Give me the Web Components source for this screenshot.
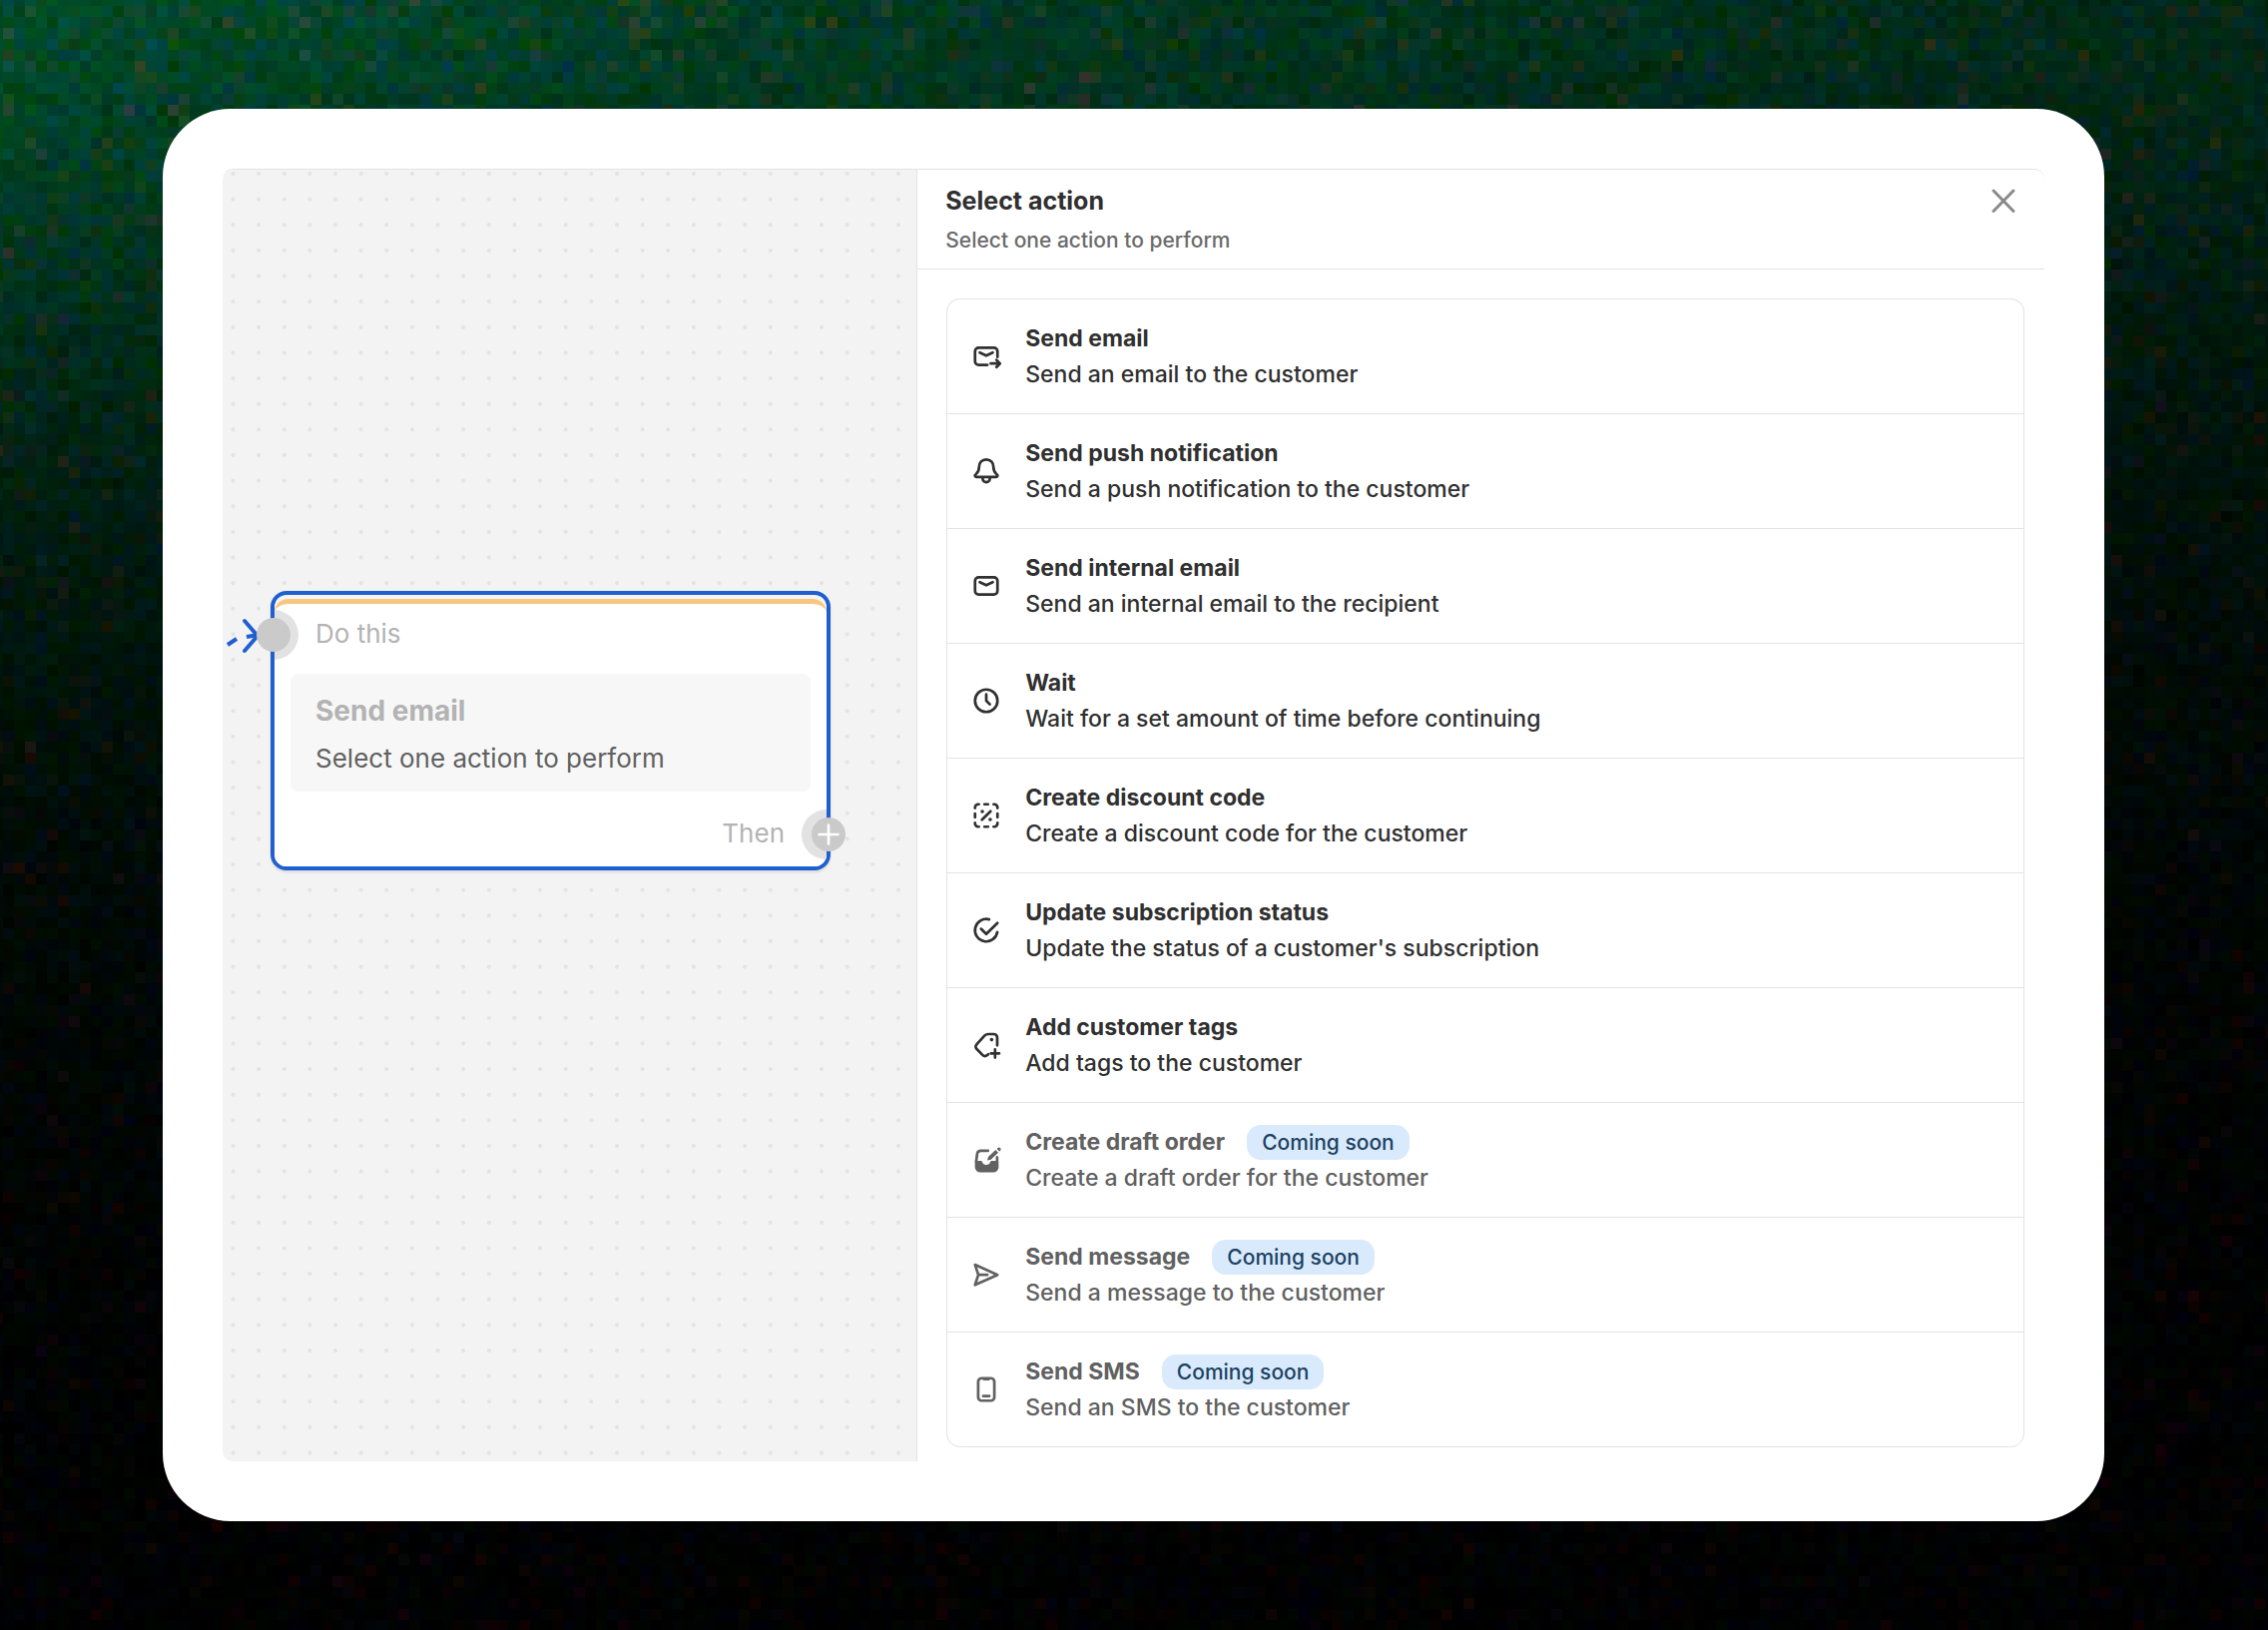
<!DOCTYPE html>
<html lang="en">
<head>
<meta charset="utf-8">
<title>Select action</title>
<style>
  html { background: #000; }
  body { margin: 0; font-family: Inter, "Liberation Sans", sans-serif; color: #303030; }
</style>
</head>
<body>
<workflow-app></workflow-app>

<template id="t-app">
  <style>
    :host { display: block; position: relative; min-height: 100vh; box-sizing: border-box; padding: 109px 164px 109px 163px; }
    noise-backdrop { position: absolute; inset: 0; }
    .frame { position: relative; background: #fff; border-radius: 68px; padding: 60px; }
    .split { display: grid; grid-template-columns: minmax(0, 8fr) minmax(0, 13fr); border-top: 1px solid #e3e3e3; border-radius: 10px; }
  </style>
  <noise-backdrop></noise-backdrop>
  <main class="frame">
    <div class="split">
      <flow-canvas>
        <flow-node></flow-node>
      </flow-canvas>
      <action-panel></action-panel>
    </div>
  </main>
</template>

<template id="t-canvas">
  <style>
    :host { display: block; position: relative; overflow: hidden; background: #f3f3f3; border-radius: 10px 0 0 10px; }
    svg { position: absolute; inset: 0; width: 100%; height: 100%; }
    ::slotted(flow-node) { position: absolute; left: 48px; top: 422px; }
  </style>
  <svg aria-hidden="true">
    <defs>
      <pattern id="dots" x="-2.3" y="-8.8" width="25.63" height="25.63" patternUnits="userSpaceOnUse">
        <circle cx="12.8" cy="12.8" r="2" fill="#e2e2e2"/>
      </pattern>
    </defs>
    <rect width="100%" height="100%" fill="url(#dots)"/>
    <g fill="none" stroke="#1f5fd0" stroke-width="4" stroke-linejoin="round">
      <path d="M22 452L35 467L22 482" stroke-linecap="round"/>
      <path d="M24 468L36 466M5 476L14 470"/>
    </g>
  </svg>
  <slot></slot>
</template>

<template id="t-node">
  <style>
    :host { display: block; box-sizing: border-box; width: 561px; border: 4px solid #1f5fd0; border-radius: 16px; background: #f4f4f4; padding-top: 4px; box-shadow: 0 2px 3px #0000001a; font-size: 26px; line-height: 36px; font-weight: 400; color: #b3b3b3; }
    .card { display: flex; flex-direction: column; border-top: 5px solid #f9c67f; border-radius: 14px 14px 12px 12px; background: #fff; padding: 12px 16px 15px; }
    .in { padding-left: 25px; }
    .step { margin: 22px 0 24px; padding: 19px 25px 15px; display: flex; flex-direction: column; gap: 12px; background: #f7f7f7; border-radius: 8px; }
    h3 { margin: 0; font-size: 28px; font-weight: 650; line-height: 36px; }
    p { margin: 0; color: #616161; }
    .out { text-align: right; padding-right: 26px; }
    .halo { position: absolute; inset: 0; overflow: hidden; border-radius: 12px; pointer-events: none; }
    .halo i { position: absolute; width: 50px; height: 50px; border-radius: 50%; background: #e2e2e2; }
    .halo .a { left: -26px; top: 15px; }
    .halo .b { right: -25px; bottom: 7px; }
    .port { position: absolute; width: 34px; height: 34px; border-radius: 50%; background: #cacaca; border: 0; padding: 0; display: grid; place-items: center; }
    .port.a { left: -18px; top: 23px; }
    .port.b { right: -19px; bottom: 15px; }
    svg { width: 22px; height: 22px; }
  </style>
  <div class="card">
    <div class="in">Do this</div>
    <div class="step"><h3>Send email</h3><p>Select one action to perform</p></div>
    <div class="out">Then</div>
  </div>
  <div class="halo"><i class="a"></i><i class="b"></i></div>
  <span class="port a"></span>
  <button class="port b" type="button" aria-label="Add next step"><svg viewBox="0 0 22 22"><path d="M11 1.500V20.500M1.500 11H20.500" stroke="#fff" stroke-width="2.600" stroke-linecap="round"/></svg></button>
</template>

<template id="t-panel">
  <style>
    :host { display: flex; flex-direction: column; border-left: 1px solid #e3e3e3; }
    header { display: flex; justify-content: space-between; align-items: flex-start; padding: 13px 23px 10px 28px; border-bottom: 1px solid #e3e3e3; }
    .titles { display: flex; flex-direction: column; gap: 4px; }
    h2 { margin: 0; font-size: 25px; line-height: 36px; font-weight: 650; }
    p { margin: 0; font-size: 21px; line-height: 36px; font-weight: 450; color: #6b6b6b; }
    button { border: 0; background: none; padding: 0; width: 36px; height: 36px; display: grid; place-items: center; }
    svg { width: 36px; height: 36px; }
    .list { margin: 29px 20px 14px 29px; border: 1px solid #e3e3e3; border-bottom: 0; border-radius: 14px; display: flex; flex-direction: column; }
  </style>
  <header>
    <div class="titles"><h2>Select action</h2><p>Select one action to perform</p></div>
    <button type="button" aria-label="Close"><svg viewBox="0 0 36 36"><path d="M8 8L28 28.500M28 8L8 28.500" fill="none" stroke="#8a8a8a" stroke-width="3" stroke-linecap="round"/></svg></button>
  </header>
  <div class="list" role="list">
    <action-item role="listitem" icon="forward"><span>Send email</span><span slot="hint">Send an email to the customer</span></action-item>
    <action-item role="listitem" icon="bell"><span>Send push notification</span><span slot="hint">Send a push notification to the customer</span></action-item>
    <action-item role="listitem" icon="mail"><span>Send internal email</span><span slot="hint">Send an internal email to the recipient</span></action-item>
    <action-item role="listitem" icon="clock"><span>Wait</span><span slot="hint">Wait for a set amount of time before continuing</span></action-item>
    <action-item role="listitem" icon="discount"><span>Create discount code</span><span slot="hint">Create a discount code for the customer</span></action-item>
    <action-item role="listitem" icon="check"><span>Update subscription status</span><span slot="hint">Update the status of a customer's subscription</span></action-item>
    <action-item role="listitem" icon="tag"><span>Add customer tags</span><span slot="hint">Add tags to the customer</span></action-item>
    <action-item role="listitem" icon="draft" disabled><span>Create draft order</span><soon-badge slot="badge">Coming soon</soon-badge><span slot="hint">Create a draft order for the customer</span></action-item>
    <action-item role="listitem" icon="plane" disabled><span>Send message</span><soon-badge slot="badge">Coming soon</soon-badge><span slot="hint">Send a message to the customer</span></action-item>
    <action-item role="listitem" icon="phone" disabled><span>Send SMS</span><soon-badge slot="badge">Coming soon</soon-badge><span slot="hint">Send an SMS to the customer</span></action-item>
  </div>
</template>

<template id="t-item">
  <style>
    :host { display: block; color: #303030; border-bottom: 1px solid #e3e3e3; }
    :host([disabled]) { color: #616161; }
    :host(:last-child) { border-radius: 0 0 14px 14px; }
    button { all: unset; box-sizing: border-box; width: 100%; display: flex; align-items: center; gap: 21px; padding: 21px; cursor: pointer; }
    .icon { width: 36px; height: 36px; flex: none; }
    svg { display: block; width: 36px; height: 36px; fill: none; stroke: currentColor; stroke-width: 1.500; stroke-linecap: round; stroke-linejoin: round; }
    .text { display: flex; flex-direction: column; font-size: 23px; line-height: 36px; font-weight: 450; }
    .title { display: flex; align-items: center; gap: 22px; height: 36px; font-weight: 650; }
  </style>
  <button type="button">
    <span class="icon"></span>
    <span class="text">
      <span class="title"><slot></slot><slot name="badge"></slot></span>
      <slot name="hint"></slot>
    </span>
  </button>
</template>

<template id="t-badge">
  <style>
    :host { display: inline-block; padding: 0 15px; border-radius: 14px; background: #d9eafc; color: #1c4263; font-size: 21px; line-height: 35px; font-weight: 450; }
  </style>
  <slot></slot>
</template>

<script>
  const ICONS = {
    forward: '<path d="M16.250 10.400V7.250a2 2 0 0 0-2-2h-8.500a2 2 0 0 0-2 2v5.500a2 2 0 0 0 2 2h4.900"/><path d="M6.400 7.900L10 9.600l3.600-1.700"/><path d="M12.500 14h5M15.700 12l1.900 2-1.900 2"/>',
    mail: '<rect x="3.750" y="5.250" width="12.500" height="9.500" rx="2"/><path d="M6.400 7.900L10 9.600l3.600-1.700"/>',
    bell: '<path d="M10 3.500c-2.400 0-4 1.800-4 4.100 0 2-.6 3-1.500 3.800-.6.5-.9.900-.7 1.400.1.300.4.500.8.500h10.800c.4 0 .7-.2.800-.5.2-.5-.1-.9-.7-1.400-.9-.8-1.500-1.800-1.500-3.800 0-2.300-1.600-4.100-4-4.100z"/><path d="M8 13.600v.6a2 2 0 0 0 4 0v-.6"/>',
    clock: '<circle cx="10" cy="10" r="6.250"/><path d="M10 6.500V10l2 2"/>',
    discount: '<path d="M3.750 5.900v-.4a1.750 1.750 0 0 1 1.750-1.750h.4M14.100 3.750h.4a1.750 1.750 0 0 1 1.750 1.750v.4M16.250 14.100v.4a1.750 1.750 0 0 1-1.750 1.750h-.4M5.900 16.250h-.4a1.750 1.750 0 0 1-1.750-1.750v-.4M9 3.750h2M9 16.250h2M3.750 9v2M16.250 9v2M12.400 7.600l-4.800 4.800"/><g fill="currentColor" stroke="none"><circle cx="7.800" cy="7.800" r="1"/><circle cx="12.200" cy="12.200" r="1"/></g>',
    check: '<path d="M11.600 3.960a6.250 6.250 0 1 0 4.560 7.040"/><path d="M7.100 9.200l2.900 2.900L16.200 6"/>',
    tag: '<path d="M16.100 10.200V5.900a2 2 0 0 0-2-2h-2.900c-.9 0-1.600.3-2.200.9L4.600 9.700a1.700 1.700 0 0 0 0 2.400l3.300 3.400c.8.800 1.900.8 2.700.1l.5-.5"/><circle cx="13" cy="7" r="1" fill="currentColor" stroke="none"/><path d="M14.900 12.400v4.600M12.600 14.700h4.600"/>',
    draft: '<path d="M11 4.900H6.900c-1 0-1.700.6-1.900 1.500l-.6 4.400"/><path fill="currentColor" stroke="none" d="M3.700 10.500h3.200c.5 0 .8.300.9.800.2.900 1 1.500 2.200 1.500s2-.6 2.200-1.500c.1-.5.400-.8.900-.8h2.200V8.600c0-.4.300-.8.700-.8s.8.300.8.800l.1 5.400a3 3 0 0 1-3 3H6.700a3 3 0 0 1-3-3z"/><path fill="currentColor" stroke="none" d="M10.600 10.300l.5-1.900 4.100-3.900 1.500 1.500-4.100 3.900z"/><path fill="currentColor" stroke="none" d="M15.900 3.900l.6-.6a1 1 0 0 1 1.400 1.400l-.6.600z"/>',
    plane: '<path d="M3.750 4.500L16.250 10.100 3.750 15.700 5.600 10.100zM5.600 10.100h5"/>',
    phone: '<rect x="5.500" y="3.750" width="9" height="12.500" rx="2"/><path d="M8.300 13.700h3.400M8.700 4.300h2.600"/>'
  };

  class TemplateElement extends HTMLElement {
    constructor() {
      super();
      this.attachShadow({ mode: 'open' })
        .append(document.getElementById(this.constructor.template).content.cloneNode(true));
    }
  }

  // Green-to-black gradient broken up into coloured square grain.
  class NoiseBackdrop extends HTMLElement {
    constructor() {
      super();
      this.attachShadow({ mode: 'open' }).innerHTML =
        '<style>:host{display:block;overflow:hidden}canvas{display:block;width:100%;height:100%}</style><canvas></canvas>';
    }
    connectedCallback() {
      this.paint();
      new ResizeObserver(() => this.paint()).observe(this);
    }
    paint() {
      const canvas = this.shadowRoot.querySelector('canvas');
      const w = this.clientWidth, h = this.clientHeight;
      if (!w || !h || (canvas.width === w && canvas.height === h)) return;
      canvas.width = w;
      canvas.height = h;
      const ctx = canvas.getContext('2d');
      const cell = 11;
      let seed = 20240;
      const rand = () => {
        seed = (seed + 0x6D2B79F5) | 0;
        let t = Math.imul(seed ^ (seed >>> 15), 1 | seed);
        t = (t + Math.imul(t ^ (t >>> 7), 61 | t)) ^ t;
        return ((t ^ (t >>> 14)) >>> 0) / 4294967296;
      };
      const gauss = () => rand() + rand() + rand() + rand() - 2;
      for (let y = -5; y < h; y += cell) {
        for (let x = -8; x < w; x += cell) {
          const base = 74 * Math.exp(-x / 3600) * Math.exp(-Math.pow(Math.max(y, 0) / 530, 1.4));
          const amp = 9 + base * 0.22;
          const r = gauss() * amp * 1.8 - 7 - base * 0.12;
          const g = base + 1 + gauss() * amp * 0.4;
          const b = base * 0.6 + gauss() * amp;
          ctx.fillStyle = `rgb(${Math.max(0, Math.round(r))},${Math.max(0, Math.round(g))},${Math.max(0, Math.round(b))})`;
          ctx.fillRect(x, y, cell, cell);
        }
      }
    }
  }

  class SoonBadge extends TemplateElement { static template = 't-badge'; }
  class ActionItem extends TemplateElement {
    static template = 't-item';
    connectedCallback() {
      this.shadowRoot.querySelector('.icon').innerHTML =
        `<svg viewBox="0 0 20 20" aria-hidden="true">${ICONS[this.getAttribute('icon')]}</svg>`;
      this.shadowRoot.querySelector('button').disabled = this.hasAttribute('disabled');
    }
  }
  class ActionPanel extends TemplateElement { static template = 't-panel'; }
  class FlowNode extends TemplateElement { static template = 't-node'; }
  class FlowCanvas extends TemplateElement { static template = 't-canvas'; }
  class WorkflowApp extends TemplateElement { static template = 't-app'; }

  customElements.define('noise-backdrop', NoiseBackdrop);
  customElements.define('soon-badge', SoonBadge);
  customElements.define('action-item', ActionItem);
  customElements.define('action-panel', ActionPanel);
  customElements.define('flow-node', FlowNode);
  customElements.define('flow-canvas', FlowCanvas);
  customElements.define('workflow-app', WorkflowApp);
</script>
</body>
</html>
